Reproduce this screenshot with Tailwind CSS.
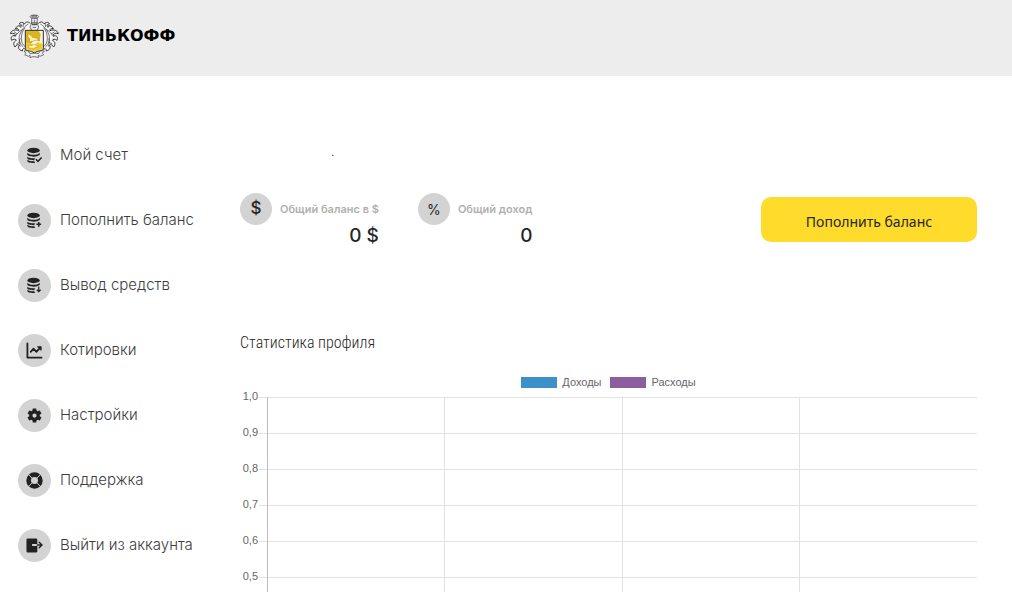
<!DOCTYPE html>
<html lang="ru">
<head>
<meta charset="utf-8">
<meta name="viewport" content="width=device-width, initial-scale=1">
<title>Тинькофф</title>
<script src="https://cdn.jsdelivr.net/npm/@tailwindcss/browser@4"></script>
</head>
<body class="flex h-screen flex-col overflow-hidden bg-white font-[Inter,sans-serif] text-[#262626]">
<svg class="hidden">
  <symbol id="coins" viewBox="0 0 18 18">
    <ellipse cx="8" cy="3.6" rx="6.6" ry="2.9"/>
    <path d="M1.400 6c1.500 1.800 4 2.200 6.600 2.200s5.100-.4 6.600-2.200v2.200c-1.500 1.400-3.900 2-6.600 2S1.400 9.600 1.400 8z"/>
    <path d="M1.400 10.200c1.500 1.400 4 1.800 6.600 1.800h1.800c-.6.600-.9 1.200-1 1.900-4.100.1-7.400-.6-7.400-2z"/>
    <path d="M1.400 13.500c1.600 1.300 4 1.700 7.400 1.700.1.700.4 1.200.8 1.700-4.600.2-8.200-.5-8.200-2z"/>
  </symbol>
</svg>
<header class="flex h-[76px] shrink-0 items-center bg-[#ededed] px-[10px]">
  <a href="#" class="flex items-center gap-[7px]">
    <svg class="-mt-1 h-[45px] w-[50px]" viewBox="15 15 150 135" fill="none" stroke="#333" stroke-width="2">
      <defs>
        <g id="mantle">
          <path d="M76 43C68 37 62 38 59 45C52 38 44 39 43 45C49 45 52 49 49 52C40 48 34 53 31 59C37 57 43 61 41 65C29 60 18 65 16 74C26 70 33 76 31 80C20 79 16 85 20 94C25 89 33 90 34 94C24 99 25 107 30 114C34 107 40 105 43 109C37 117 43 123 52 126C51 119 57 117 62 121" fill="#f7f7f7" stroke-width="3"/>
          <path d="M70 45C61 50 50 61 44 78C40 91 44 105 55 114M53 61C41 67 35 76 29 84M46 88C40 96 44 105 46 113M60 56C53 65 49 75 49 88C49 99 53 108 61 113M56 42L54 54M43 49L48 57M27 68L37 75M34 105L45 99"/>
        </g>
      </defs>
      <use href="#mantle"/>
      <use href="#mantle" transform="matrix(-1 0 0 1 176 0)"/>
      <ellipse cx="88" cy="23" rx="13" ry="5" fill="#e7e7e7"/>
      <ellipse cx="88" cy="22" rx="8" ry="2"/>
      <path d="M80 28h17l-1 14 5 12-6 12H81l-6-12 5-12z" fill="#eee"/>
      <path d="M79 42h19M81 47h15" stroke-width="3"/>
      <path d="M83 55h10M88 32v9"/>
      <path d="M61 64h54v54q0 6-7 7-14 1-20 7-6-6-20-7-7-1-7-7z" fill="#f7f2e3" stroke="#292929" stroke-width="3"/>
      <path d="M63 66h38l6 9-3 22-10-3-10 3-4 6-17-2z" fill="#dcb51d" stroke="none"/>
      <path d="M63 101l14 1 10 7 11-9 15 5v15l-15 4-10 5-9-5-16-3z" fill="#f1ca27" stroke="none"/>
      <path d="M69 74l9 5 4 6 12 2 10 8-12-2-8 4-12 2 3-9-6-6zM71 108l10 2 6-5 14 8-9 2-6 4-14-2z" fill="#fff3ae" stroke="#80671b" stroke-width="1"/>
      <path d="M57 126l11-1 7 9c8-2 17-2 25 0l7-9 11 1-6 7 4 4-11 5-5-3v7c-8-4-17-4-25 0v-7l-5 3-11-5 4-4z" fill="#eee"/>
    </svg>
    <span class="-mt-1 font-['DejaVu_Sans',sans-serif] text-[16px] leading-5 font-bold text-black">ТИНЬКОФФ</span>
  </a>
</header>
<div class="flex min-h-0 flex-1">
  <nav class="w-[240px] shrink-0 pt-[63px] pl-[18px] text-[15px] font-light text-[#3d3d3d]">
    <ul class="flex flex-col gap-8">
      <li><a href="#" class="flex items-center gap-[9px]"><span class="grid size-[33px] place-items-center rounded-full bg-[#d3d3d3]"><svg class="size-[17px]" viewBox="0 0 18 18" fill="#222"><use href="#coins"/><path d="M10.500 13l2.200 2.200 3.800-4" fill="none" stroke="#222" stroke-width="1.600"/></svg></span>Мой счет</a></li>
      <li><a href="#" class="flex items-center gap-[9px]"><span class="grid size-[33px] place-items-center rounded-full bg-[#d3d3d3]"><svg class="size-[17px]" viewBox="0 0 18 18" fill="#222"><use href="#coins"/><path d="M13.500 10.500v5M11 13h5" fill="none" stroke="#222" stroke-width="1.600"/></svg></span>Пополнить баланс</a></li>
      <li><a href="#" class="flex items-center gap-[9px]"><span class="grid size-[33px] place-items-center rounded-full bg-[#d3d3d3]"><svg class="size-[17px]" viewBox="0 0 18 18" fill="#222"><use href="#coins"/><path d="M13.500 10v5.500M11.500 13.500l2 2 2-2" fill="none" stroke="#222" stroke-width="1.300"/></svg></span>Вывод средств</a></li>
      <li><a href="#" class="flex items-center gap-[9px]"><span class="grid size-[33px] place-items-center rounded-full bg-[#d3d3d3]"><svg class="size-[17px]" viewBox="0 0 18 18" fill="none" stroke="#222" stroke-width="1.900" stroke-linecap="round" stroke-linejoin="round"><path d="M1.500 1.500v15h15M5 10.500l3-3.500 3 3.500 4-4.500"/><path d="M12.500 5h3.500v3.500z" fill="#222" stroke-width="1"/></svg></span>Котировки</a></li>
      <li><a href="#" class="flex items-center gap-[9px]"><span class="grid size-[33px] place-items-center rounded-full bg-[#d3d3d3]"><svg class="size-[17px]" viewBox="0 0 24 24" fill="#222"><path d="M19.430 12.980c.04-.32.070-.64.070-.98s-.03-.66-.07-.98l2.110-1.650a.5.500 0 0 0 .12-.64l-2-3.460a.5.500 0 0 0-.61-.22l-2.490 1a7.300 7.300 0 0 0-1.690-.98l-.38-2.650A.5.500 0 0 0 14 2h-4a.5.500 0 0 0-.49.420l-.38 2.650c-.61.250-1.170.590-1.690.980l-2.490-1a.5.500 0 0 0-.61.220l-2 3.460a.5.500 0 0 0 .12.640l2.110 1.650a8 8 0 0 0 0 1.960l-2.110 1.650a.5.500 0 0 0-.12.640l2 3.460c.12.220.39.300.61.220l2.490-1c.52.400 1.080.730 1.690.980l.38 2.650c.03.240.24.420.49.420h4c.25 0 .46-.18.490-.42l.38-2.650a7.300 7.300 0 0 0 1.690-.98l2.490 1c.23.090.49 0 .61-.22l2-3.460a.5.500 0 0 0-.12-.64zM12 15a3 3 0 1 1 0-6 3 3 0 0 1 0 6z"/></svg></span>Настройки</a></li>
      <li><a href="#" class="flex items-center gap-[9px]"><span class="grid size-[33px] place-items-center rounded-full bg-[#d3d3d3]"><svg class="size-[17px]" viewBox="0 0 18 18" fill="none"><circle cx="9" cy="9" r="6.200" stroke="#222" stroke-width="5"/><path d="M2 2l4.500 4.500M11.500 11.500L16 16M16 2l-4.500 4.500M6.500 11.500L2 16" stroke="#d3d3d3" stroke-width="1"/></svg></span>Поддержка</a></li>
      <li><a href="#" class="flex items-center gap-[9px]"><span class="grid size-[33px] place-items-center rounded-full bg-[#d3d3d3]"><svg class="size-[17px]" viewBox="0 0 18 18" fill="none"><path d="M2 1.500h8.500q1.500 0 1.500 1.500V7.500H6.500v2H12v5.500q0 1.500-1.500 1.500H2Q.5 16.500.5 15V3Q.5 1.500 2 1.500z" fill="#222"/><path d="M12 8.500h5M14 5.500l3 3-3 3" stroke="#222" stroke-width="1.500" stroke-linecap="round"/></svg></span>Выйти из аккаунта</a></li>
    </ul>
  </nav>
  <main class="flex min-w-0 flex-1 flex-col pr-[35px]">
    <p class="pt-[68px] pl-[91px] text-[12px] leading-4 font-light">.</p>
    <section class="flex items-start pt-[33px]">
      <div class="flex gap-2">
        <span class="grid size-8 place-items-center rounded-full bg-[#d3d3d3] text-[17px] font-medium">$</span>
        <dl class="pt-2 text-right">
          <dt class="text-[11px] leading-4 font-semibold text-[#b0b0b0]">Общий баланс в $</dt>
          <dd class="pt-1 text-[19px] leading-[30px] font-medium">0 $</dd>
        </dl>
      </div>
      <div class="ml-[39px] flex gap-2">
        <span class="grid size-8 place-items-center rounded-full bg-[#d3d3d3] text-[14px]">%</span>
        <dl class="pt-2 text-right">
          <dt class="text-[11px] leading-4 font-semibold text-[#b0b0b0]">Общий доход</dt>
          <dd class="pt-1 text-[19px] leading-[30px] font-medium">0</dd>
        </dl>
      </div>
      <button type="button" class="mt-1 ml-auto h-[45px] w-[216px] rounded-[10px] bg-[#ffdc2c] pt-1 font-['Noto_Sans',sans-serif] text-[14px] text-[#262626]">Пополнить баланс</button>
    </section>
    <h1 class="mt-[78px] font-['Roboto_Condensed',sans-serif] text-[16px] leading-7 font-light">Статистика профиля</h1>
    <section aria-label="График доходов и расходов" class="mt-[13px] flex min-h-0 flex-1 flex-col overflow-hidden font-['Liberation_Sans',sans-serif] text-[11px] text-[#666]">
      <div class="flex h-[24px] shrink-0 items-center justify-center gap-[9px]">
        <span class="flex items-center gap-[5px]"><i class="h-[11px] w-9 bg-[#3d91ca]"></i>Доходы</span>
        <span class="flex items-center gap-[5px]"><i class="h-[11px] w-9 bg-[#8d5e9f]"></i>Расходы</span>
      </div>
      <div class="flex">
        <div class="-mt-4 w-[18px] shrink-0 text-right leading-9">
          <div class="h-9">1,0</div><div class="h-9">0,9</div><div class="h-9">0,8</div><div class="h-9">0,7</div><div class="h-9">0,6</div><div class="h-9">0,5</div>
        </div>
        <div class="mt-[3px] ml-px w-2 shrink-0">
          <div class="h-9 border-t border-[#e2e2e2]"></div><div class="h-9 border-t border-[#e2e2e2]"></div><div class="h-9 border-t border-[#e2e2e2]"></div><div class="h-9 border-t border-[#e2e2e2]"></div><div class="h-9 border-t border-[#e2e2e2]"></div><div class="h-9 border-t border-[#e2e2e2]"></div>
        </div>
        <div class="mt-[3px] grid flex-1 auto-rows-[36px] grid-cols-4 border-l border-[#bdbdbd] *:border-t *:border-[#e2e2e2] [&>:not(:nth-child(4n))]:border-r">
          <i></i><i></i><i></i><i></i><i></i><i></i><i></i><i></i><i></i><i></i><i></i><i></i><i></i><i></i><i></i><i></i><i></i><i></i><i></i><i></i><i></i><i></i><i></i><i></i>
        </div>
      </div>
    </section>
  </main>
</div>
</body>
</html>
